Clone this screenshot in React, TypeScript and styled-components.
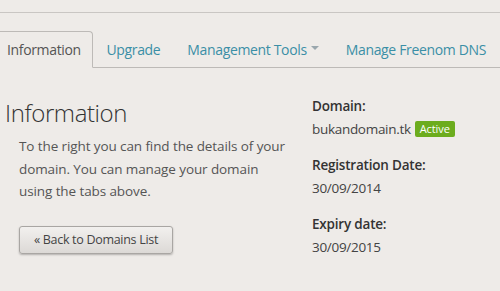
import React from "react";
import styled, { createGlobalStyle } from "styled-components";

const Global = createGlobalStyle`
  html, body { margin: 0; padding: 0; background: #eeebe8; }
  body { font-family: "Open Sans", "Noto Sans", sans-serif; color: #444; }
`;

const Page = styled.div`
  width: 500px;
  height: 291px;
  overflow: hidden;
  background: #eeebe8;
  padding-top: 12px;
  box-sizing: border-box;
`;

const TopRule = styled.div`
  height: 1px;
  background: #c9c6c3;
`;

const Tabs = styled.nav`
  display: flex;
  margin-top: 18px;
  height: 37px;
  border-bottom: 1px solid #bdbab7;
  box-sizing: border-box;
`;

const Tab = styled.a<{ $active?: boolean }>`
  display: flex;
  align-items: center;
  flex-shrink: 0;
  white-space: nowrap;
  gap: 4px;
  font-size: 14px;
  letter-spacing: -0.35px;
  color: ${(p) => (p.$active ? "#555" : "#3b8fa6")};
  text-decoration: none;
  box-sizing: border-box;
  ${(p) =>
    p.$active
      ? `
    width: 93px;
    padding-left: 7px;
    height: 37px;
    border: 1px solid #bdbab7;
    border-left: none;
    border-bottom: 1px solid #eeebe8;
    border-radius: 0 4px 0 0;
    background: #eeebe8;
    margin-bottom: -1px;
  `
      : `
    padding: 0 13.5px;
  `}
`;

const Caret = styled.span`
  width: 0;
  height: 0;
  border-left: 4px solid transparent;
  border-right: 4px solid transparent;
  border-top: 4px solid #9aa7ad;
  margin-top: -3px;
`;

const Content = styled.div`
  display: flex;
  padding-top: 30px;
`;

const Left = styled.section`
  width: 312px;
  flex-shrink: 0;
`;

const Heading = styled.h1`
  margin: 0 0 0 5px;
  font-size: 24px;
  font-weight: 300;
  color: #333;
  line-height: 30px;
  letter-spacing: -0.4px;
`;

const Lead = styled.p`
  margin: 7px 0 0 19px;
  font-size: 13.5px;
  line-height: 22.5px;
  color: #555;
  letter-spacing: -0.1px;
  width: 268px;
`;

const BackButton = styled.button`
  margin: 23px 0 0 19px;
  width: 154px;
  height: 28px;
  font-family: inherit;
  font-size: 12.5px;
  color: #444;
  letter-spacing: -0.3px;
  border: 1px solid #a9a6a3;
  border-radius: 3px;
  background: linear-gradient(#f2f0ee, #dcd9d6);
  box-shadow: 0 1px 2px rgba(0,0,0,0.25);
  padding: 0;
`;

const Right = styled.aside`
  display: flex;
  flex-direction: column;
  margin-top: -3px;
`;

const Label = styled.div<{ $first?: boolean }>`
  font-size: 13.5px;
  font-weight: 600;
  color: #333;
  line-height: 22px;
  letter-spacing: -0.2px;
  margin-top: ${(p) => (p.$first ? "0" : "14px")};
`;

const Value = styled.div`
  display: flex;
  align-items: center;
  gap: 4px;
  margin-top: 1px;
  font-size: 13.5px;
  color: #444;
  line-height: 22px;
  letter-spacing: -0.3px;
`;

const Badge = styled.span`
  background: #6cac1e;
  color: #fff;
  font-size: 11px;
  line-height: 14px;
  padding: 1px 5px;
  border-radius: 2px;
  letter-spacing: -0.1px;
`;

export default function App() {
  return (
    <Page>
      <Global />
      <TopRule />
      <Tabs>
        <Tab $active>Information</Tab>
        <Tab>Upgrade</Tab>
        <Tab>
          Management Tools <Caret />
        </Tab>
        <Tab>Manage Freenom DNS</Tab>
      </Tabs>
      <Content>
        <Left>
          <Heading>Information</Heading>
          <Lead>
            To the right you can find the details of your domain. You can manage your domain
            using the tabs above.
          </Lead>
          <BackButton>« Back to Domains List</BackButton>
        </Left>
        <Right>
          <Label $first>Domain:</Label>
          <Value>
            bukandomain.tk <Badge>Active</Badge>
          </Value>
          <Label>Registration Date:</Label>
          <Value>30/09/2014</Value>
          <Label>Expiry date:</Label>
          <Value>30/09/2015</Value>
        </Right>
      </Content>
    </Page>
  );
}
